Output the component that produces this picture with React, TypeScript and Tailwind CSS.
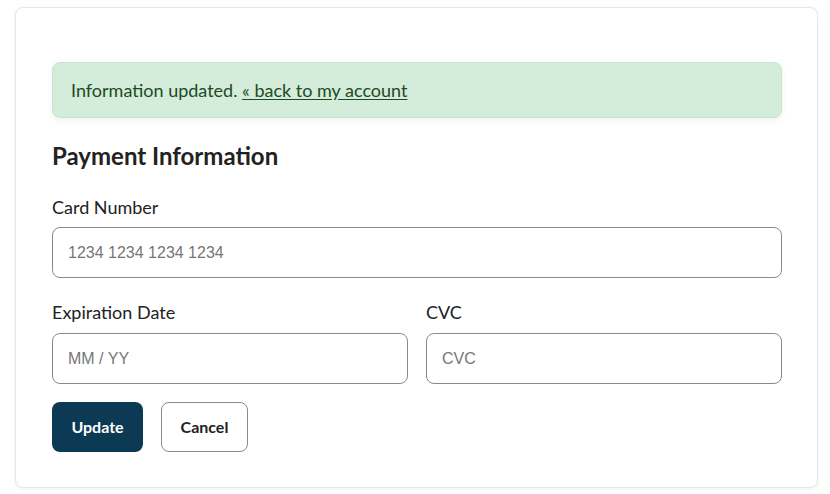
import React from 'react';

const lato = { fontFamily: 'Lato, "Open Sans", sans-serif' };
const arial = { fontFamily: '"Liberation Sans", Arial, sans-serif' };

export default function App() {
  return (
    <div className="min-h-screen bg-white px-[15px] pt-[7px]" style={lato}>
      <div className="w-[803px] rounded-lg border border-[#e6e6e6] bg-white pl-9 pr-[35px] pt-[54px] pb-[35px] shadow-[0_1px_4px_rgba(0,0,0,0.06)]">
        <div className="flex h-[56px] items-center rounded-lg border border-[#c9e5cf] bg-[#d4ecda] px-[18px] text-[18px] text-[#1d4a25] shadow-[0_2px_6px_rgba(0,0,0,0.06)]">
          <span>
            Information updated.{' '}
            <a href="#" className="underline underline-offset-2">
              « back to my account
            </a>
          </span>
        </div>

        <h2 className="mt-[23px] text-[24px] font-bold leading-[30px] text-[#222]">Payment Information</h2>

        <form className="mt-[23px]" onSubmit={e => e.preventDefault()}>
          <label className="block text-[18px] leading-[26px] text-[#222]">Card Number</label>
          <input
            className="mt-[7px] block h-[51px] w-full rounded-lg border border-[#8a8a8a] px-[15px] text-[16px] placeholder:text-[#777] outline-none"
            style={arial}
            placeholder="1234 1234 1234 1234"
          />

          <div className="mt-[21px] grid grid-cols-2 gap-[18px]">
            <div>
              <label className="block text-[18px] leading-[26px] text-[#222]">Expiration Date</label>
              <input
                className="mt-[8px] block h-[51px] w-full rounded-lg border border-[#8a8a8a] px-[15px] text-[16px] placeholder:text-[#777] outline-none"
                style={arial}
                placeholder="MM / YY"
              />
            </div>
            <div>
              <label className="block text-[18px] leading-[26px] text-[#222]">CVC</label>
              <input
                className="mt-[8px] block h-[51px] w-full rounded-lg border border-[#8a8a8a] px-[15px] text-[16px] placeholder:text-[#777] outline-none"
                style={arial}
                placeholder="CVC"
              />
            </div>
          </div>

          <div className="mt-[18px] flex gap-[18px]">
            <button className="h-[50px] w-[91px] rounded-lg bg-[#0c3a55] text-[16px] font-bold text-white">Update</button>
            <button className="h-[50px] w-[87px] rounded-lg border border-[#8a8a8a] bg-white text-[16px] font-bold text-[#222]">Cancel</button>
          </div>
        </form>
      </div>
    </div>
  );
}
